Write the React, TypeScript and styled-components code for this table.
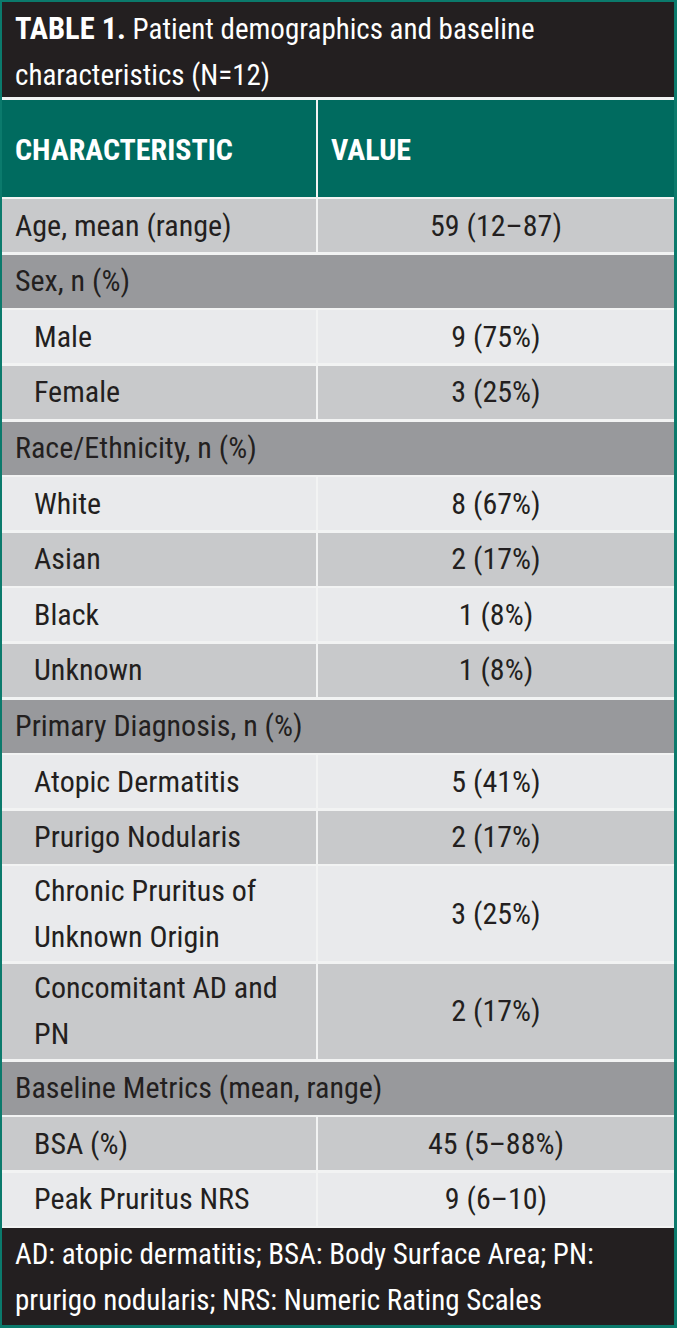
import React from "react";
import styled, { createGlobalStyle } from "styled-components";

const FONT = `"Roboto Condensed", "Liberation Sans Narrow", "Arial Narrow", "DejaVu Sans Condensed", sans-serif`;

const GlobalStyle = createGlobalStyle`
  html, body { margin: 0; padding: 0; background: #ffffff; }
  body { font-family: ${FONT}; }
  * { box-sizing: border-box; }
`;

const Frame = styled.div`
  width: 677px;
  height: 1328px;
  border: 2px solid #0b7a6c;
  border-bottom-width: 3px;
  border-right-width: 3px;
  background: #f2f3f3;
  display: flex;
  flex-direction: column;
  gap: 2.6px;
  font-family: ${FONT};
  color: #231f20;
`;

const TitleBar = styled.div`
  background: #231f20;
  color: #ffffff;
  height: 95px;
  padding: 4px 13px 0;
  font-size: 29px;
  line-height: 46px;
`;

const Strong = styled.b`
  font-weight: 700;
  font-size: 30.5px;
`;

const Row = styled.div<{ $double?: boolean }>`
  display: grid;
  grid-template-columns: 314px 1fr;
  column-gap: 2px;
  min-height: ${(p) => (p.$double ? 95 : 53)}px;
`;

const HeadRow = styled(Row)`
  min-height: 97px;
`;

const HeadCell = styled.div`
  background: #006b5f;
  color: #ffffff;
  font-weight: 700;
  font-size: 30px;
  display: flex;
  align-items: center;
  padding: 2px 13px 0;
`;

const GroupRow = styled.div`
  background: #98999c;
  min-height: 53px;
  display: flex;
  align-items: center;
  padding: 0 13px;
  font-size: 30px;
  line-height: 46px;
`;

const Cell = styled.div<{ $shade: "light" | "mid"; $indent?: boolean; $center?: boolean }>`
  background: ${(p) => (p.$shade === "light" ? "#e9eaec" : "#c8c9cb")};
  display: flex;
  flex-direction: column;
  justify-content: center;
  align-items: ${(p) => (p.$center ? "center" : "flex-start")};
  padding: 0 ${(p) => (p.$center ? 0 : 8)}px 0 ${(p) => (p.$center ? 0 : p.$indent ? 32 : 13)}px;
  font-size: 30px;
  line-height: 46px;
  white-space: nowrap;
`;

const Footer = styled.div`
  background: #231f20;
  color: #ffffff;
  flex: 1;
  padding: 3px 13px 0;
  font-size: 29px;
  line-height: 46px;
  white-space: nowrap;
`;

const Line = styled.span`
  display: block;
`;

type Item =
  | { kind: "group"; label: string }
  | { kind: "row"; label: string[]; value: string; indent?: boolean; shade: "light" | "mid" };

const items: Item[] = [
  { kind: "row", label: ["Age, mean (range)"], value: "59 (12–87)", shade: "mid" },
  { kind: "group", label: "Sex, n (%)" },
  { kind: "row", label: ["Male"], value: "9 (75%)", indent: true, shade: "light" },
  { kind: "row", label: ["Female"], value: "3 (25%)", indent: true, shade: "mid" },
  { kind: "group", label: "Race/Ethnicity, n (%)" },
  { kind: "row", label: ["White"], value: "8 (67%)", indent: true, shade: "light" },
  { kind: "row", label: ["Asian"], value: "2 (17%)", indent: true, shade: "mid" },
  { kind: "row", label: ["Black"], value: "1 (8%)", indent: true, shade: "light" },
  { kind: "row", label: ["Unknown"], value: "1 (8%)", indent: true, shade: "mid" },
  { kind: "group", label: "Primary Diagnosis, n (%)" },
  { kind: "row", label: ["Atopic Dermatitis"], value: "5 (41%)", indent: true, shade: "light" },
  { kind: "row", label: ["Prurigo Nodularis"], value: "2 (17%)", indent: true, shade: "mid" },
  { kind: "row", label: ["Chronic Pruritus of", "Unknown Origin"], value: "3 (25%)", indent: true, shade: "light" },
  { kind: "row", label: ["Concomitant AD and", "PN"], value: "2 (17%)", indent: true, shade: "mid" },
  { kind: "group", label: "Baseline Metrics (mean, range)" },
  { kind: "row", label: ["BSA (%)"], value: "45 (5–88%)", indent: true, shade: "mid" },
  { kind: "row", label: ["Peak Pruritus NRS"], value: "9 (6–10)", indent: true, shade: "light" },
];

export default function App() {
  return (
    <>
      <GlobalStyle />
      <Frame>
        <TitleBar>
          <Line>
            <Strong>TABLE 1.</Strong> Patient demographics and baseline
          </Line>
          <Line>characteristics (N=12)</Line>
        </TitleBar>
        <HeadRow>
          <HeadCell>CHARACTERISTIC</HeadCell>
          <HeadCell>VALUE</HeadCell>
        </HeadRow>
        {items.map((it, i) =>
          it.kind === "group" ? (
            <GroupRow key={i}>{it.label}</GroupRow>
          ) : (
            <Row key={i} $double={it.label.length > 1}>
              <Cell $shade={it.shade} $indent={it.indent}>
                {it.label.map((l, j) => (
                  <Line key={j}>{l}</Line>
                ))}
              </Cell>
              <Cell $shade={it.shade} $center>
                {it.value}
              </Cell>
            </Row>
          )
        )}
        <Footer>
          <Line>AD: atopic dermatitis; BSA: Body Surface Area; PN:</Line>
          <Line>prurigo nodularis; NRS: Numeric Rating Scales</Line>
        </Footer>
      </Frame>
    </>
  );
}
